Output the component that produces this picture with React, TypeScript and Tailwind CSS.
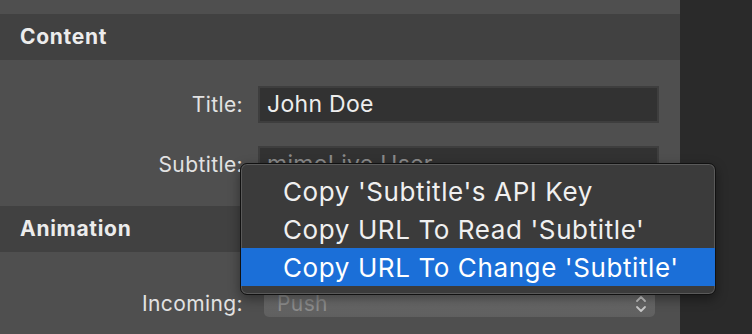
import React from 'react';

const font = { fontFamily: 'Inter, "Noto Sans", sans-serif' };

function SectionHeader({ title }: { title: string }) {
  return (
    <div className="flex h-[46px] items-center bg-[#414141] px-[20px] text-[21px] font-bold tracking-[0.7px] text-[#ececec]">
      {title}
    </div>
  );
}

function Row({ label, children }: { label: string; children: React.ReactNode }) {
  return (
    <div className="flex items-center">
      <div className="w-[243px] text-right text-[21px] tracking-[0.4px] text-[#e2e2e2]">{label}</div>
      <div className="ml-[15px] w-[401px]">{children}</div>
    </div>
  );
}

export default function App() {
  const items = [
    "Copy 'Subtitle's API Key",
    "Copy URL To Read 'Subtitle'",
    "Copy URL To Change 'Subtitle'",
  ];
  return (
    <div className="relative flex h-[334px] w-[752px] overflow-hidden bg-[#2a2a2a]" style={font}>
      {/* Inspector panel */}
      <div className="flex w-[680px] flex-col bg-[#4f4f4f] pt-[14px]">
        <SectionHeader title="Content" />
        <div className="flex flex-col gap-[23px] pt-[26px] pb-[23px]">
          <Row label="Title:">
            <div className="flex h-[37px] items-center border-2 border-[#3e3e3e] bg-[#323232] px-[7px] text-[23px] tracking-[0.3px] text-[#ededed]">
              John Doe
            </div>
          </Row>
          <Row label="Subtitle:">
            <div className="flex h-[37px] items-center border-2 border-[#3e3e3e] bg-[#323232] px-[7px] text-[23px] tracking-[0.3px] text-[#8a8a8a]">
              mimoLive User
            </div>
          </Row>
        </div>
        <SectionHeader title="Animation" />
        <div className="pt-[36px]">
          <div className="flex items-center">
            <div className="w-[243px] text-right text-[21px] tracking-[0.4px] text-[#e2e2e2]">Incoming:</div>
            <div className="ml-[21px] flex h-[26px] w-[391px] items-center justify-between rounded-[5px] bg-gradient-to-b from-[#6e6e6e] to-[#5f5f5f] pl-[13px] pr-[8px] text-[21px] tracking-[0.4px] text-[#8d8d8d]">
              <span>Push</span>
              <svg width="12" height="18" viewBox="0 0 12 18" fill="none" stroke="#c8c8c8" strokeWidth="1.8" strokeLinecap="round" strokeLinejoin="round">
                <path d="M2 6 L6 2 L10 6" />
                <path d="M2 12 L6 16 L10 12" />
              </svg>
            </div>
          </div>
        </div>
      </div>

      {/* Context menu */}
      <div className="absolute left-[240px] top-[163px] w-[476px] rounded-[7px] border border-[#111111] bg-[#3b3b3b] py-[8px] shadow-[inset_0_0_0_1px_#5a5a5a,0_4px_12px_rgba(0,0,0,0.4)]">
        {items.map((t, i) => (
          <div
            key={t}
            className={
              i === 2
                ? 'flex h-[38px] items-center bg-[#1b6fd8] pl-[42px] text-[26px] tracking-[0.6px] text-white'
                : 'flex h-[38px] items-center pl-[42px] text-[26px] tracking-[0.6px] text-[#f0f0f0]'
            }
          >
            {t}
          </div>
        ))}
      </div>
    </div>
  );
}
